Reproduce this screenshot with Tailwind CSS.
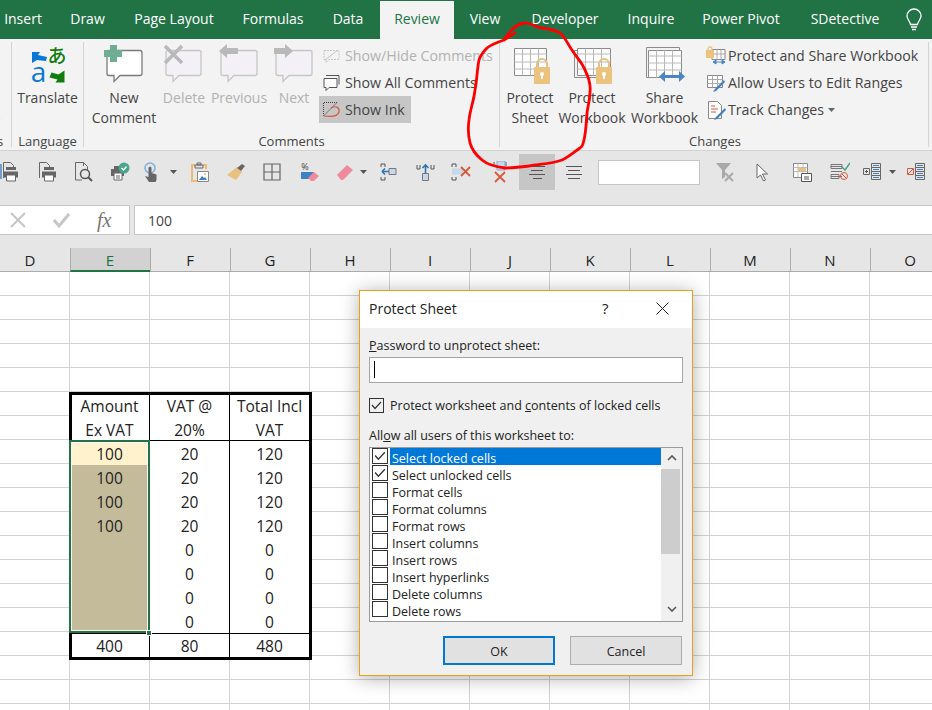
<!DOCTYPE html>
<html lang="en">
<head>
  <meta charset="UTF-8">
  <title>Protect Sheet</title>
  <script src="https://cdn.jsdelivr.net/npm/@tailwindcss/browser@4"></script>
</head>
<body class="relative w-[932px] h-[710px] overflow-hidden bg-white font-['Open_Sans',sans-serif] text-[14px] text-[#444]">

  <!-- Tabs -->
  <div class="flex h-[39px] bg-[#217346] text-white pt-px">
    <div class="w-[46px] text-center leading-[36px]">Insert</div>
    <div class="w-[83px] text-center leading-[36px]">Draw</div>
    <div class="w-[90px] text-center leading-[36px]">Page Layout</div>
    <div class="w-[108px] text-center leading-[36px]">Formulas</div>
    <div class="w-[42px] text-center leading-[36px]">Data</div>
    <div class="w-[11px]"></div>
    <div class="w-[74px] text-center leading-[36px] bg-[#f3f3f3] text-[#217346]">Review</div>
    <div class="w-[62px] text-center leading-[36px]">View</div>
    <div class="w-[98px] text-center leading-[36px]">Developer</div>
    <div class="w-[74px] text-center leading-[36px]">Inquire</div>
    <div class="w-[106px] text-center leading-[36px]">Power Pivot</div>
    <div class="w-[102px] text-center leading-[36px]">SDetective</div>
    <div class="w-[36px] flex justify-center pt-[7px]">
      <svg width="18" height="24" viewBox="0 0 18 24" fill="none" stroke="#fff" stroke-width="1.3"><path d="M5.500 16.500C5 13 2 11.500 2 8a7 7 0 0 1 14 0c0 3.500-3 5-3.500 8.500z"/><path d="M6 19h6M7 21.500h4"/></svg>
    </div>
  </div>

  <!-- Ribbon -->
  <div class="flex h-[112px] bg-[#f3f3f3] border-b border-[#d2d2d2] text-[14px] leading-[20px]">
    <div class="w-[12px] shrink-0 my-[3px] border-r border-[#d4d4d4] relative">
      <div class="absolute left-[-8px] top-[66px]">o</div>
      <div class="absolute left-[-3px] top-[89px] text-[13px]">s</div>
    </div>

    <!-- Language -->
    <div class="w-[72px] shrink-0 my-[3px] border-r border-[#d4d4d4]">
      <div class="h-[89px] flex flex-col items-center">
        <svg class="mt-[2px]" width="44" height="42" viewBox="0 0 44 42">
          <path d="M6 8h8l-2 3 9 2-1 4-9-1-5 3z" fill="#0a78d7"/>
          <text x="31" y="19" font-size="19" fill="#107c10" font-family="'Noto Sans CJK JP'" font-weight="500" text-anchor="middle">あ</text>
          <text x="12.500" y="38" font-size="28" fill="#0a78d7" text-anchor="middle" font-family="'Open Sans'">a</text>
          <path d="M38.500 38.500h-9l2-3-8-2 2-5 7 2 6-4z" fill="#107c10"/>
        </svg>
        <div class="mt-[2px] whitespace-nowrap">Translate</div>
      </div>
      <div class="text-[13px] text-center">Language</div>
    </div>

    <!-- Comments -->
    <div class="w-[416px] shrink-0 my-[3px] border-r border-[#d4d4d4]">
      <div class="flex h-[89px]">
        <div class="w-[5px]"></div>
        <div class="w-[70px] flex flex-col items-center">
          <svg class="mt-[2px]" width="44" height="42" viewBox="0 0 44 42">
            <path d="M7 6.500h31a2 2 0 0 1 2 2v21a2 2 0 0 1-2 2H18l-6 6v-6H7a2 2 0 0 1-2-2v-21a2 2 0 0 1 2-2z" fill="#fff" stroke="#7a7a7a" stroke-width="1.300"/>
            <path d="M2 6h6V1h7v5h5v7h-5v5H8v-5H2z" fill="#6fae94"/>
          </svg>
          <div class="mt-[2px] text-center whitespace-nowrap">New<br>Comment</div>
        </div>
        <div class="w-[50px] flex flex-col items-center text-[#b1b1b1]">
          <svg class="mt-[2px]" width="44" height="42" viewBox="0 0 44 42">
            <path d="M6 6.500h31a2 2 0 0 1 2 2v21a2 2 0 0 1-2 2H17l-6 6v-6H6a2 2 0 0 1-2-2v-21a2 2 0 0 1 2-2z" fill="#f4f1f6" stroke="#c6c6c6" stroke-width="1.300"/>
            <path d="M3 2l17 17M20 2L3 19" stroke="#b9b9b9" stroke-width="3.500" fill="none"/>
          </svg>
          <div class="mt-[2px] whitespace-nowrap">Delete</div>
        </div>
        <div class="w-[60px] flex flex-col items-center text-[#b1b1b1]">
          <svg class="mt-[2px]" width="44" height="42" viewBox="0 0 44 42">
            <path d="M6 6.500h32a2 2 0 0 1 2 2v21a2 2 0 0 1-2 2H17l-6 6v-6H6a2 2 0 0 1-2-2v-21a2 2 0 0 1 2-2z" fill="#f4f1f6" stroke="#c6c6c6" stroke-width="1.300"/>
            <path d="M2 7l8-7v4h11v6H10v4z" fill="#b9b9b9"/>
          </svg>
          <div class="mt-[2px] whitespace-nowrap">Previous</div>
        </div>
        <div class="w-[50px] flex flex-col items-center text-[#b1b1b1]">
          <svg class="mt-[2px]" width="44" height="42" viewBox="0 0 44 42">
            <path d="M6 6.500h32a2 2 0 0 1 2 2v21a2 2 0 0 1-2 2H17l-6 6v-6H6a2 2 0 0 1-2-2v-21a2 2 0 0 1 2-2z" fill="#f4f1f6" stroke="#c6c6c6" stroke-width="1.300"/>
            <path d="M21 7l-8-7v4H2v6h11v4z" fill="#b9b9b9"/>
          </svg>
          <div class="mt-[2px] whitespace-nowrap">Next</div>
        </div>
        <div class="flex-1 text-[14.200px]">
          <div class="h-[27px] flex items-center pl-[3px] gap-[4px] whitespace-nowrap text-[#b1b1b1]">
            <svg width="19" height="18" viewBox="0 0 19 18" fill="none" stroke="#c4c4c4"><path d="M2 3.500h15v9H7l-3 3v-3H2z" stroke-dasharray="2 1"/><path d="M3 13L16 3"/></svg>
            <span>Show/Hide Comments</span>
          </div>
          <div class="h-[27px] flex items-center pl-[3px] gap-[4px] whitespace-nowrap">
            <svg width="19" height="18" viewBox="0 0 19 18" fill="none" stroke="#555"><path d="M4 1.500h13v9"/><path d="M2 4.500h13v9H7l-3 3v-3H2z" fill="#fff"/></svg>
            <span>Show All Comments</span>
          </div>
          <div class="h-[27px] w-[92px] flex items-center pl-[3px] gap-[4px] whitespace-nowrap bg-[#c6c6c6]">
            <svg width="19" height="18" viewBox="0 0 19 18" fill="none"><path d="M1.500 15V1.500H16" stroke="#444" stroke-dasharray="1 1"/><path d="M1.500 15L15 1.500" stroke="#777"/><path d="M9 7c5-3 9 0 8 4s-7 5-15 4" stroke="#d9583b" stroke-width="1.200"/></svg>
            <span>Show Ink</span>
          </div>
        </div>
      </div>
      <div class="text-[13px] text-center">Comments</div>
    </div>

    <!-- Changes -->
    <div class="flex-1 my-[3px] mr-[3px] border-r border-[#d4d4d4]">
      <div class="flex h-[89px]">
        <div class="w-[60px] flex flex-col items-center">
          <svg class="mt-[2px]" width="44" height="42" viewBox="0 0 44 42" fill="none">
            <path d="M6.500 4.500h32v27h-32z" fill="#fff" stroke="#8c8c8c"/>
            <path d="M6.500 10h32M6.500 18h32M6.500 25h32M14.500 4.500v27M22.500 4.500v27M30.500 4.500v27" stroke="#b9b9b9"/>
            <path d="M29 24v-4a5 5 0 0 1 10 0v4" stroke="#e8c07f" stroke-width="2"/><rect x="26" y="23" width="16" height="17" rx="1" fill="#ecc27f"/><circle cx="34" cy="30" r="2" fill="#fff"/><path d="M33 31h2v4h-2z" fill="#fff"/>
          </svg>
          <div class="mt-[2px] text-center whitespace-nowrap">Protect<br>Sheet</div>
        </div>
        <div class="w-[64px] flex flex-col items-center">
          <svg class="mt-[2px]" width="44" height="42" viewBox="0 0 44 42" fill="none">
            <path d="M4.500 6.500h32v27h-32z" fill="#f3f3f3" stroke="#8c8c8c"/>
            <path d="M7.500 4.500h33v27h-33z" fill="#fff" stroke="#8c8c8c"/>
            <path d="M7.500 10h33M7.500 18h33M7.500 25h33M15.500 4.500v27M23.500 4.500v27M31.500 4.500v27" stroke="#b9b9b9"/>
            <path d="M29 24v-4a5 5 0 0 1 10 0v4" stroke="#e8c07f" stroke-width="2"/><rect x="26" y="23" width="16" height="17" rx="1" fill="#ecc27f"/><circle cx="34" cy="30" r="2" fill="#fff"/><path d="M33 31h2v4h-2z" fill="#fff"/>
          </svg>
          <div class="mt-[2px] text-center whitespace-nowrap">Protect<br>Workbook</div>
        </div>
        <div class="w-[81px] flex flex-col items-center">
          <svg class="mt-[2px]" width="44" height="42" viewBox="0 0 44 42" fill="none">
            <path d="M3.500 3.500h33v30h-33z" fill="#f3f3f3" stroke="#8c8c8c"/>
            <path d="M5.500 6.500h33v27h-33z" fill="#fff" stroke="#8c8c8c"/>
            <path d="M5.500 12h33M5.500 19h33M5.500 26h33M13.500 6.500v27M21.500 6.500v27M29.500 6.500v27" stroke="#b9b9b9"/>
            <path d="M16 32.500l6-5.500v4h14v-4l6 5.500-6 5.500v-4H22v4z" fill="#4a86c5"/>
          </svg>
          <div class="mt-[2px] text-center whitespace-nowrap">Share<br>Workbook</div>
        </div>
        <div class="flex-1 text-[14.200px]">
          <div class="h-[27px] flex items-center gap-[1px] whitespace-nowrap">
            <svg width="22" height="20" viewBox="0 0 22 20" fill="none"><path d="M7 3.500h13v10H7z" fill="#fff" stroke="#888"/><path d="M7 8h13M12 3.500v10M16 3.500v10" stroke="#aaa"/><rect x="1" y="4" width="8" height="8" fill="#ecc27f"/><path d="M3 5V3a2 2 0 0 1 4 0v2" stroke="#ecc27f" stroke-width="1.300"/><path d="M8 16h12M8 16l3-2v4zM20 16l-3-2v4z" stroke="#4a86c5" fill="#4a86c5"/></svg>
            <span>Protect and Share Workbook</span>
          </div>
          <div class="h-[27px] flex items-center gap-[1px] whitespace-nowrap">
            <svg width="22" height="20" viewBox="0 0 22 20" fill="none"><path d="M2.500 2.500h15v12h-15z" fill="#fff" stroke="#888"/><path d="M2.500 6.500h15M2.500 10.500h15M7.500 2.500v12M12.500 2.500v12" stroke="#aaa"/><path d="M19 7L10 16l-2 3 3-1 9-9z" fill="#3f7fc4"/></svg>
            <span>Allow Users to Edit Ranges</span>
          </div>
          <div class="h-[27px] flex items-center gap-[1px] whitespace-nowrap">
            <svg width="22" height="20" viewBox="0 0 22 20" fill="none"><path d="M3.500 1.500h9l4 4v13h-13z" fill="#fff" stroke="#888"/><path d="M6 6h4M6 9h7M6 12h5" stroke="#d9583b"/><path d="M20 8L11 17l-2 3 3-1 9-9z" fill="#3f7fc4"/></svg>
            <span>Track Changes</span>
            <svg class="ml-[3px]" width="7" height="4" viewBox="0 0 7 4"><path d="M0 0h7L3.500 4z" fill="#666"/></svg>
          </div>
        </div>
      </div>
      <div class="text-[13px] pl-[189px]">Changes</div>
    </div>
  </div>

  <!-- Quick toolbar -->
  <div class="flex h-[54px] bg-[#e6e6e6] pt-[3px] ml-0">
    <div class="flex h-[36px] items-center ml-[-8px]">
      <div class="w-[36px] flex justify-center">
        <svg width="20" height="22" viewBox="0 0 20 22" fill="none"><path d="M1 3v15" stroke="#4a86c5" stroke-width="1.500"/><path d="M3.500 17V1.500h7l3 3V9" stroke="#666"/><path d="M6 9h10v-3H6zM4 10.500h14v6H4z" fill="#666"/><path d="M6.500 14h9v6h-9z" fill="#fff" stroke="#666"/></svg>
      </div>
      <div class="w-[40px] flex justify-center">
        <svg width="20" height="22" viewBox="0 0 20 22" fill="none"><path d="M1.500 17V1.500h7l3 3V9" stroke="#666"/><path d="M6 9h10v-3H6zM4 10.500h14v6H4z" fill="#666"/><path d="M6.500 14h9v6h-9z" fill="#fff" stroke="#666"/></svg>
      </div>
      <div class="w-[32px] flex justify-center">
        <svg width="20" height="22" viewBox="0 0 20 22" fill="none"><path d="M1.500 19V1.500h8l4 4V9M1.500 19H8" stroke="#666"/><path d="M9.500 5V1.500" stroke="#666"/><circle cx="11" cy="13" r="4.500" stroke="#555" stroke-width="1.500"/><path d="M14 16l4 4" stroke="#555" stroke-width="2"/></svg>
      </div>
      <div class="w-[40px] flex justify-center">
        <svg width="20" height="20" viewBox="0 0 20 20" fill="none"><path d="M1 7h13v7H1z" fill="#666"/><path d="M4 4h8v3H4z" fill="#666"/><path d="M4 11h8v7H4z" fill="#fff" stroke="#666"/><path d="M6 14h4M6 16h4" stroke="#666"/><circle cx="14" cy="6" r="5.500" fill="#4aa58b"/><path d="M11.500 6l2 2 3-3.500" stroke="#fff" stroke-width="1.200"/></svg>
      </div>
      <div class="w-[24px] flex justify-center">
        <svg width="16" height="20" viewBox="0 0 16 20" fill="none"><circle cx="6" cy="6" r="5" stroke="#7fb0e0" stroke-width="1.600"/><path d="M4.500 6a1.500 1.500 0 0 1 3 0v5l5 1.500V18l-1 2H5l-4-6 3.500 1z" fill="#666"/></svg>
      </div>
      <div class="w-[18px] flex justify-center">
        <svg width="7" height="4" viewBox="0 0 7 4"><path d="M0 0h7L3.500 4z" fill="#555"/></svg>
      </div>
      <div class="w-[36px] flex justify-center">
        <svg width="18" height="20" viewBox="0 0 18 20" fill="none"><path d="M4 3H1v16h5" stroke="#edba74" stroke-width="2"/><path d="M12 3h3v4" stroke="#edba74" stroke-width="2"/><path d="M4 3h8v3H4zM6 1h4v2H6z" stroke="#666"/><path d="M6.500 9.500h11v10h-11z" fill="#fff" stroke="#888"/><path d="M8 18l3-4 2 2 1-1 2 3z" fill="#3f7fc4"/><circle cx="14" cy="12" r="1" fill="#edba74"/></svg>
      </div>
      <div class="w-[36px] flex justify-center">
        <svg width="18" height="18" viewBox="0 0 18 18"><path d="M10 4l5 5-6 8-9-5z" fill="#e8c07f"/><path d="M10 5l5-4 3 2-4 5z" fill="#666"/></svg>
      </div>
      <div class="w-[36px] flex justify-center">
        <svg width="18" height="18" viewBox="0 0 18 18" fill="none" stroke="#666" stroke-width="1.200"><path d="M1 1h16v16H1zM9 1v16M1 9h16"/></svg>
      </div>
      <div class="w-[40px] flex justify-center">
        <svg width="20" height="20" viewBox="0 0 20 20"><text x="5" y="8" font-size="9" fill="#444" text-anchor="middle" font-family="'Open Sans'">%</text><path d="M1 10h13l-5 7H1z" fill="#3f7fc4"/><path d="M8 16l6-6 5 4-5 5h-3z" fill="#ee8a9a"/></svg>
      </div>
      <div class="w-[30px] flex justify-center">
        <svg width="18" height="18" viewBox="0 0 18 18"><path d="M1 12L11 2l6 5-10 10H5z" fill="#ee8a9a"/></svg>
      </div>
      <div class="w-[6px] flex justify-center overflow-visible">
        <svg class="shrink-0" width="7" height="4" viewBox="0 0 7 4"><path d="M0 0h7L3.500 4z" fill="#555"/></svg>
      </div>
      <div class="w-[44px] flex justify-center">
        <svg width="17" height="18" viewBox="0 0 17 18" fill="none"><path d="M5 4V1H1v3M1 14v3h4v-3" stroke="#555"/><path d="M9 5.500h7v6H9z" fill="#c6d9ec" stroke="#777"/><path d="M9 8.500H2M2 8.500l3-3M2 8.500l3 3" stroke="#2f75b5" stroke-width="1.600"/></svg>
      </div>
      <div class="w-[30px] flex justify-center">
        <svg width="19" height="18" viewBox="0 0 19 18" fill="none"><path d="M1 2v4h3V2M15 2v4h3V2" stroke="#555"/><path d="M6.500 10.500h6v7h-6z" fill="#c6d9ec" stroke="#777"/><path d="M9.500 10V2M6.500 5l3-3 3 3" stroke="#2f75b5" stroke-width="1.600"/></svg>
      </div>
      <div class="w-[42px] flex justify-center">
        <svg width="20" height="18" viewBox="0 0 20 18" fill="none"><path d="M5 4V1H1v3M1 14v3h4v-3" stroke="#555"/><path d="M1 5.500h11v6H1z" fill="#c6d9ec"/><path d="M10 4l9 9M19 4l-9 9" stroke="#d9583b" stroke-width="1.800"/></svg>
      </div>
      <div class="w-[37px] flex justify-center">
        <svg width="16" height="22" viewBox="0 0 16 22" fill="none"><path d="M1 1v4M13 1v4" stroke="#555"/><path d="M4 0h8v9H4z" fill="#c6d9ec" stroke="#8aa8c8"/><path d="M2 11l10 10M12 11L2 21" stroke="#d9583b" stroke-width="1.800"/></svg>
      </div>
      <div class="w-[36px] h-[36px] bg-[#c6c6c6] flex items-center justify-center">
        <svg width="18" height="16" viewBox="0 0 18 16" stroke="#555"><path d="M1 2.500h16M3 6.500h12M1 10.500h16M5 14.500h9"/></svg>
      </div>
      <div class="w-[38px] flex justify-center">
        <svg width="18" height="16" viewBox="0 0 18 16" stroke="#555"><path d="M1 2.500h16M3 6.500h12M1 10.500h16M3 14.500h12"/></svg>
      </div>
      <div class="w-[102px] h-[25px] ml-[5px] bg-white border border-[#c6c6c6]"></div>
      <div class="w-[50px] flex justify-center">
        <svg width="20" height="20" viewBox="0 0 20 20" fill="none"><path d="M1 1h15l-6 7v7l-3 2V8z" fill="#a9a9a9"/><path d="M10 11l8 8M18 11l-8 8" stroke="#a9a9a9" stroke-width="2"/></svg>
      </div>
      <div class="w-[24px] flex justify-center">
        <svg width="13" height="19" viewBox="0 0 13 19"><path d="M1 1v14l3.500-3 3 6 2-1-3-6h5z" fill="#fff" stroke="#666"/></svg>
      </div>
      <div class="w-[56px] flex justify-center">
        <svg width="20" height="20" viewBox="0 0 20 20" fill="none"><path d="M1.500 1.500h14v14h-14z" fill="#fff" stroke="#888"/><path d="M1.500 5.500h14M1.500 9.500h14M6 1.500v14M11 1.500v14" stroke="#bbb"/><path d="M6 6h8v3H6z" fill="#e8c07f"/><path d="M9.500 11.500h10v8h-10z" fill="#fff" stroke="#555"/><path d="M12 15h5M12 17h5" stroke="#555"/></svg>
      </div>
      <div class="w-[20px] flex justify-center">
        <svg class="shrink-0" width="20" height="20" viewBox="0 0 20 20" fill="none"><path d="M1 4.500h11M1 9.500h11M1 14.500h11M1 2.500h11v4H1zM1 12.500h8v4H1z" stroke="#777"/><path d="M12 5l3 3 5-7" stroke="#4aa58b" stroke-width="1.500"/><circle cx="14" cy="14" r="3.500" stroke="#d9583b"/><path d="M12 12l4 4" stroke="#d9583b"/></svg>
      </div>
      <div class="w-[11px]"></div>
      <div class="w-[22px] flex justify-center">
        <svg width="20" height="20" viewBox="0 0 20 20" fill="none"><path d="M9.500 1.500h9v4h-9zM9.500 5.500h9v4h-9zM9.500 9.500h9v4h-9zM9.500 13.500h9v4h-9z" stroke="#666"/><path d="M11 3.500h6M11 7.500h6M11 11.500h6M11 15.500h6" stroke="#3f7fc4"/><path d="M1.500 6.500h6v6h-6z" stroke="#666"/><path d="M3 9.500h3M4.500 8v3" stroke="#555"/></svg>
      </div>
      <div class="w-[18px] flex justify-center">
        <svg width="7" height="4" viewBox="0 0 7 4"><path d="M0 0h7L3.500 4z" fill="#555"/></svg>
      </div>
      <div class="w-[30px] flex justify-center">
        <svg width="20" height="20" viewBox="0 0 20 20" fill="none"><path d="M9.500 1.500h9v4h-9zM9.500 5.500h9v4h-9zM9.500 9.500h9v4h-9zM9.500 13.500h9v4h-9z" stroke="#666"/><path d="M11 3.500h6M11 7.500h6M11 11.500h6M11 15.500h6" stroke="#3f7fc4"/><path d="M1.500 6.500h6v6h-6z" stroke="#d9583b"/><path d="M2 12l5-5" stroke="#d9583b"/></svg>
      </div>
    </div>
  </div>

  <!-- Formula bar -->
  <div class="flex h-[31px] bg-[#e6e6e6] gap-[4px]">
    <div class="w-[130px] h-[30px] bg-white border border-[#c6c6c6] border-l-0 flex items-center">
      <svg class="ml-[10px]" width="16" height="16" viewBox="0 0 16 16" stroke="#c6c6c6" stroke-width="2"><path d="M1 1l14 14M15 1L1 15"/></svg>
      <svg class="ml-[27px]" width="17" height="16" viewBox="0 0 17 16" fill="none" stroke="#c6c6c6" stroke-width="3"><path d="M1 8l5 6L16 2"/></svg>
      <span class="ml-[27px] font-['Liberation_Serif',serif] italic text-[20px] text-[#777]">fx</span>
    </div>
    <div class="flex-1 h-[30px] bg-white border border-[#c6c6c6] border-r-0 pl-[13px] leading-[29px] text-[14px]">100</div>
  </div>

  <!-- Column headers -->
  <div class="flex h-[36px] bg-[#e6e6e6] pt-[12px] text-[15px] text-[#222]">
    <div class="w-[70px] h-[24px] shrink-0 border-b border-[#ababab] text-center leading-[24px] pr-[10px]">D</div>
    <div class="w-[80px] h-[24px] shrink-0 bg-[#d2d2d2] border-b-2 border-b-[#217346] border-l border-l-[#ababab] text-center leading-[24px] pr-[1px] text-[#217346]">E</div>
    <div class="w-[80px] h-[24px] shrink-0 border-b border-l border-[#ababab] text-center leading-[24px] pr-[1px]">F</div>
    <div class="w-[80px] h-[24px] shrink-0 border-b border-l border-[#ababab] text-center leading-[24px] pr-[1px]">G</div>
    <div class="w-[80px] h-[24px] shrink-0 border-b border-l border-[#ababab] text-center leading-[24px] pr-[1px]">H</div>
    <div class="w-[80px] h-[24px] shrink-0 border-b border-l border-[#ababab] text-center leading-[24px] pr-[1px]">I</div>
    <div class="w-[80px] h-[24px] shrink-0 border-b border-l border-[#ababab] text-center leading-[24px] pr-[1px]">J</div>
    <div class="w-[80px] h-[24px] shrink-0 border-b border-l border-[#ababab] text-center leading-[24px] pr-[1px]">K</div>
    <div class="w-[80px] h-[24px] shrink-0 border-b border-l border-[#ababab] text-center leading-[24px] pr-[1px]">L</div>
    <div class="w-[80px] h-[24px] shrink-0 border-b border-l border-[#ababab] text-center leading-[24px] pr-[1px]">M</div>
    <div class="w-[80px] h-[24px] shrink-0 border-b border-l border-[#ababab] text-center leading-[24px] pr-[1px]">N</div>
    <div class="w-[80px] h-[24px] shrink-0 border-b border-l border-[#ababab] text-center leading-[24px] pr-[1px]">O</div>
  </div>

  <!-- Sheet -->
  <div class="h-[438px] pt-[120px] bg-[linear-gradient(#d2d2d2_1px,transparent_1px),linear-gradient(90deg,#d2d2d2_1px,transparent_1px)] bg-[size:80px_24px] bg-[position:69px_23px] text-[15.500px] text-[#222]">
    <div class="ml-[69px] w-[243px] border-[3px] border-black bg-white text-center leading-[24px]">
      <div class="flex border-b border-black h-[46px]">
        <div class="w-[78px] pr-[2px] border-r border-black -mt-px">Amount<br>Ex VAT</div>
        <div class="w-[80px] border-r border-black -mt-px">VAT @<br>20%</div>
        <div class="w-[79px] -mt-px">Total Incl<br>VAT</div>
      </div>
      <div class="flex h-[192px]">
        <div class="w-[78px] relative border-r border-black">
          <div class="h-[24px] pt-px pr-[2px] bg-[#fff2cc]">100</div>
          <div class="h-[168px] pt-px pr-[2px] bg-[#c4bb9b]">100<br>100<br>100</div>
          <div class="absolute left-[-3px] top-[-1px] right-[-1px] bottom-0 border-2 border-[#217346] shadow-[inset_0_0_0_1px_#fff]"></div>
          <div class="absolute right-[-3px] bottom-[-3px] w-[6px] h-[6px] bg-[#217346] border border-white"></div>
        </div>
        <div class="w-[80px] pt-px border-r border-black">20<br>20<br>20<br>20<br>0<br>0<br>0<br>0</div>
        <div class="w-[79px] pt-px">120<br>120<br>120<br>120<br>0<br>0<br>0<br>0</div>
      </div>
      <div class="flex border-t border-black h-[24px]">
        <div class="w-[78px] pr-[2px] border-r border-black">400</div>
        <div class="w-[80px] border-r border-black">80</div>
        <div class="w-[79px]">480</div>
      </div>
    </div>
  </div>

  <!-- Protect Sheet dialog -->
  <div class="absolute left-[359px] top-[290px] w-[334px] h-[386px] border border-[#e3a21a] bg-[#f0f0f0] shadow-[0_2px_18px_rgba(0,0,0,0.32)] text-[12.500px] text-[#222] flex flex-col">
    <div class="h-[37px] bg-white flex items-center pl-[9px] shrink-0 pb-[2px]">
      <span class="text-[14px] w-[233px]">Protect Sheet</span>
      <span class="text-[15px] w-[54px]">?</span>
      <svg width="13" height="13" viewBox="0 0 13 13" stroke="#222"><path d="M.5.500l12 12M12.500.500l-12 12"/></svg>
    </div>
    <div class="px-[9px] flex-1 flex flex-col">
      <div class="mt-[9px] leading-[18px]"><u>P</u>assword to unprotect sheet:</div>
      <div class="mt-[2px] h-[26px] w-[314px] bg-white border border-[#a5a5a5] pl-[4px] pt-[3px]">
        <div class="w-px h-[17px] bg-black"></div>
      </div>
      <div class="mt-[14px] flex items-center h-[16px] gap-[6px]">
        <div class="w-[15px] h-[15px] border border-[#333] bg-[#f0f0f0] flex items-center justify-center">
          <svg width="11" height="9" viewBox="0 0 11 9" fill="none" stroke="#333" stroke-width="1.200"><path d="M1 4l3 3.500L10 1"/></svg>
        </div>
        <span class="relative top-[1px]">Protect worksheet and <u>c</u>ontents of locked cells</span>
      </div>
      <div class="mt-[14px] leading-[18px]">All<u>o</u>w all users of this worksheet to:</div>
      <div class="mt-[2px] h-[175px] w-[314px] bg-[#f0f0f0] border border-[#9a9a9a] flex">
        <div class="w-[291px] h-[173px] bg-white overflow-hidden pl-[2px] leading-[21px]">
          <div class="flex h-[17px] gap-[2px]">
            <div class="w-[16px] h-[16px] shrink-0 border border-[#333] bg-white flex items-center justify-center"><svg width="12" height="10" viewBox="0 0 11 9" fill="none" stroke="#333" stroke-width="1.200"><path d="M1 4l3 3.500L10 1"/></svg></div>
            <div class="flex-1 bg-[#0078d7] text-white pl-[2px]">Select locked cells</div>
          </div>
          <div class="flex h-[17px] gap-[2px]">
            <div class="w-[16px] h-[16px] shrink-0 border border-[#333] bg-white flex items-center justify-center"><svg width="12" height="10" viewBox="0 0 11 9" fill="none" stroke="#333" stroke-width="1.200"><path d="M1 4l3 3.500L10 1"/></svg></div>
            <div class="flex-1 pl-[2px]">Select unlocked cells</div>
          </div>
          <div class="flex h-[17px] gap-[2px]"><div class="w-[16px] h-[16px] shrink-0 border border-[#333] bg-white"></div><div class="flex-1 pl-[2px]">Format cells</div></div>
          <div class="flex h-[17px] gap-[2px]"><div class="w-[16px] h-[16px] shrink-0 border border-[#333] bg-white"></div><div class="flex-1 pl-[2px]">Format columns</div></div>
          <div class="flex h-[17px] gap-[2px]"><div class="w-[16px] h-[16px] shrink-0 border border-[#333] bg-white"></div><div class="flex-1 pl-[2px]">Format rows</div></div>
          <div class="flex h-[17px] gap-[2px]"><div class="w-[16px] h-[16px] shrink-0 border border-[#333] bg-white"></div><div class="flex-1 pl-[2px]">Insert columns</div></div>
          <div class="flex h-[17px] gap-[2px]"><div class="w-[16px] h-[16px] shrink-0 border border-[#333] bg-white"></div><div class="flex-1 pl-[2px]">Insert rows</div></div>
          <div class="flex h-[17px] gap-[2px]"><div class="w-[16px] h-[16px] shrink-0 border border-[#333] bg-white"></div><div class="flex-1 pl-[2px]">Insert hyperlinks</div></div>
          <div class="flex h-[17px] gap-[2px]"><div class="w-[16px] h-[16px] shrink-0 border border-[#333] bg-white"></div><div class="flex-1 pl-[2px]">Delete columns</div></div>
          <div class="flex h-[17px] gap-[2px]"><div class="w-[16px] h-[16px] shrink-0 border border-[#333] bg-white"></div><div class="flex-1 pl-[2px]">Delete rows</div></div>
        </div>
        <div class="flex-1 flex flex-col items-center">
          <svg class="mt-[7px]" width="10" height="6" viewBox="0 0 10 6" fill="none" stroke="#555" stroke-width="1.600"><path d="M1 5l4-4 4 4"/></svg>
          <div class="mt-[8px] w-[19px] h-[85px] bg-[#cdcdcd] self-start"></div>
          <svg class="mt-auto mb-[9px]" width="10" height="6" viewBox="0 0 10 6" fill="none" stroke="#555" stroke-width="1.600"><path d="M1 1l4 4 4-4"/></svg>
        </div>
      </div>
      <div class="mt-[14px] flex pl-[74px] gap-[15px]">
        <div class="w-[112px] h-[29px] border-2 border-[#0078d7] bg-[#e1e1e1] text-center leading-[27px]">OK</div>
        <div class="w-[112px] h-[29px] border border-[#adadad] bg-[#e1e1e1] text-center leading-[29px]">Cancel</div>
      </div>
    </div>
  </div>

  <!-- Red ink scribble -->
  <svg class="absolute left-0 top-0 pointer-events-none" width="932" height="710" fill="none" stroke="#fe0000" stroke-width="2.800" stroke-linecap="round" stroke-linejoin="round">
    <path d="M515 33C511 36 507 38 504 40C509 32 516 24 524 23C531 22 536 28 542 28C550 29 555 30 560 33C566 38 568 45 572 50C577 58 582 62 585 70C589 78 591 84 590 92C590 100 588 105 587 113C586 124 586 132 584 140C583 145 582 147 580 148C574 152 569 157 562 160C551 164 540 164 529 166C521 167 513 168 505 168C497 167 488 165 482 160C476 155 472 150 470 143C468 135 468 127 469 120C470 110 474 100 475 90C477 80 477 70 479 60C481 54 484 51 487 48C492 44 498 42 504 40"/>
  </svg>

</body>
</html>
